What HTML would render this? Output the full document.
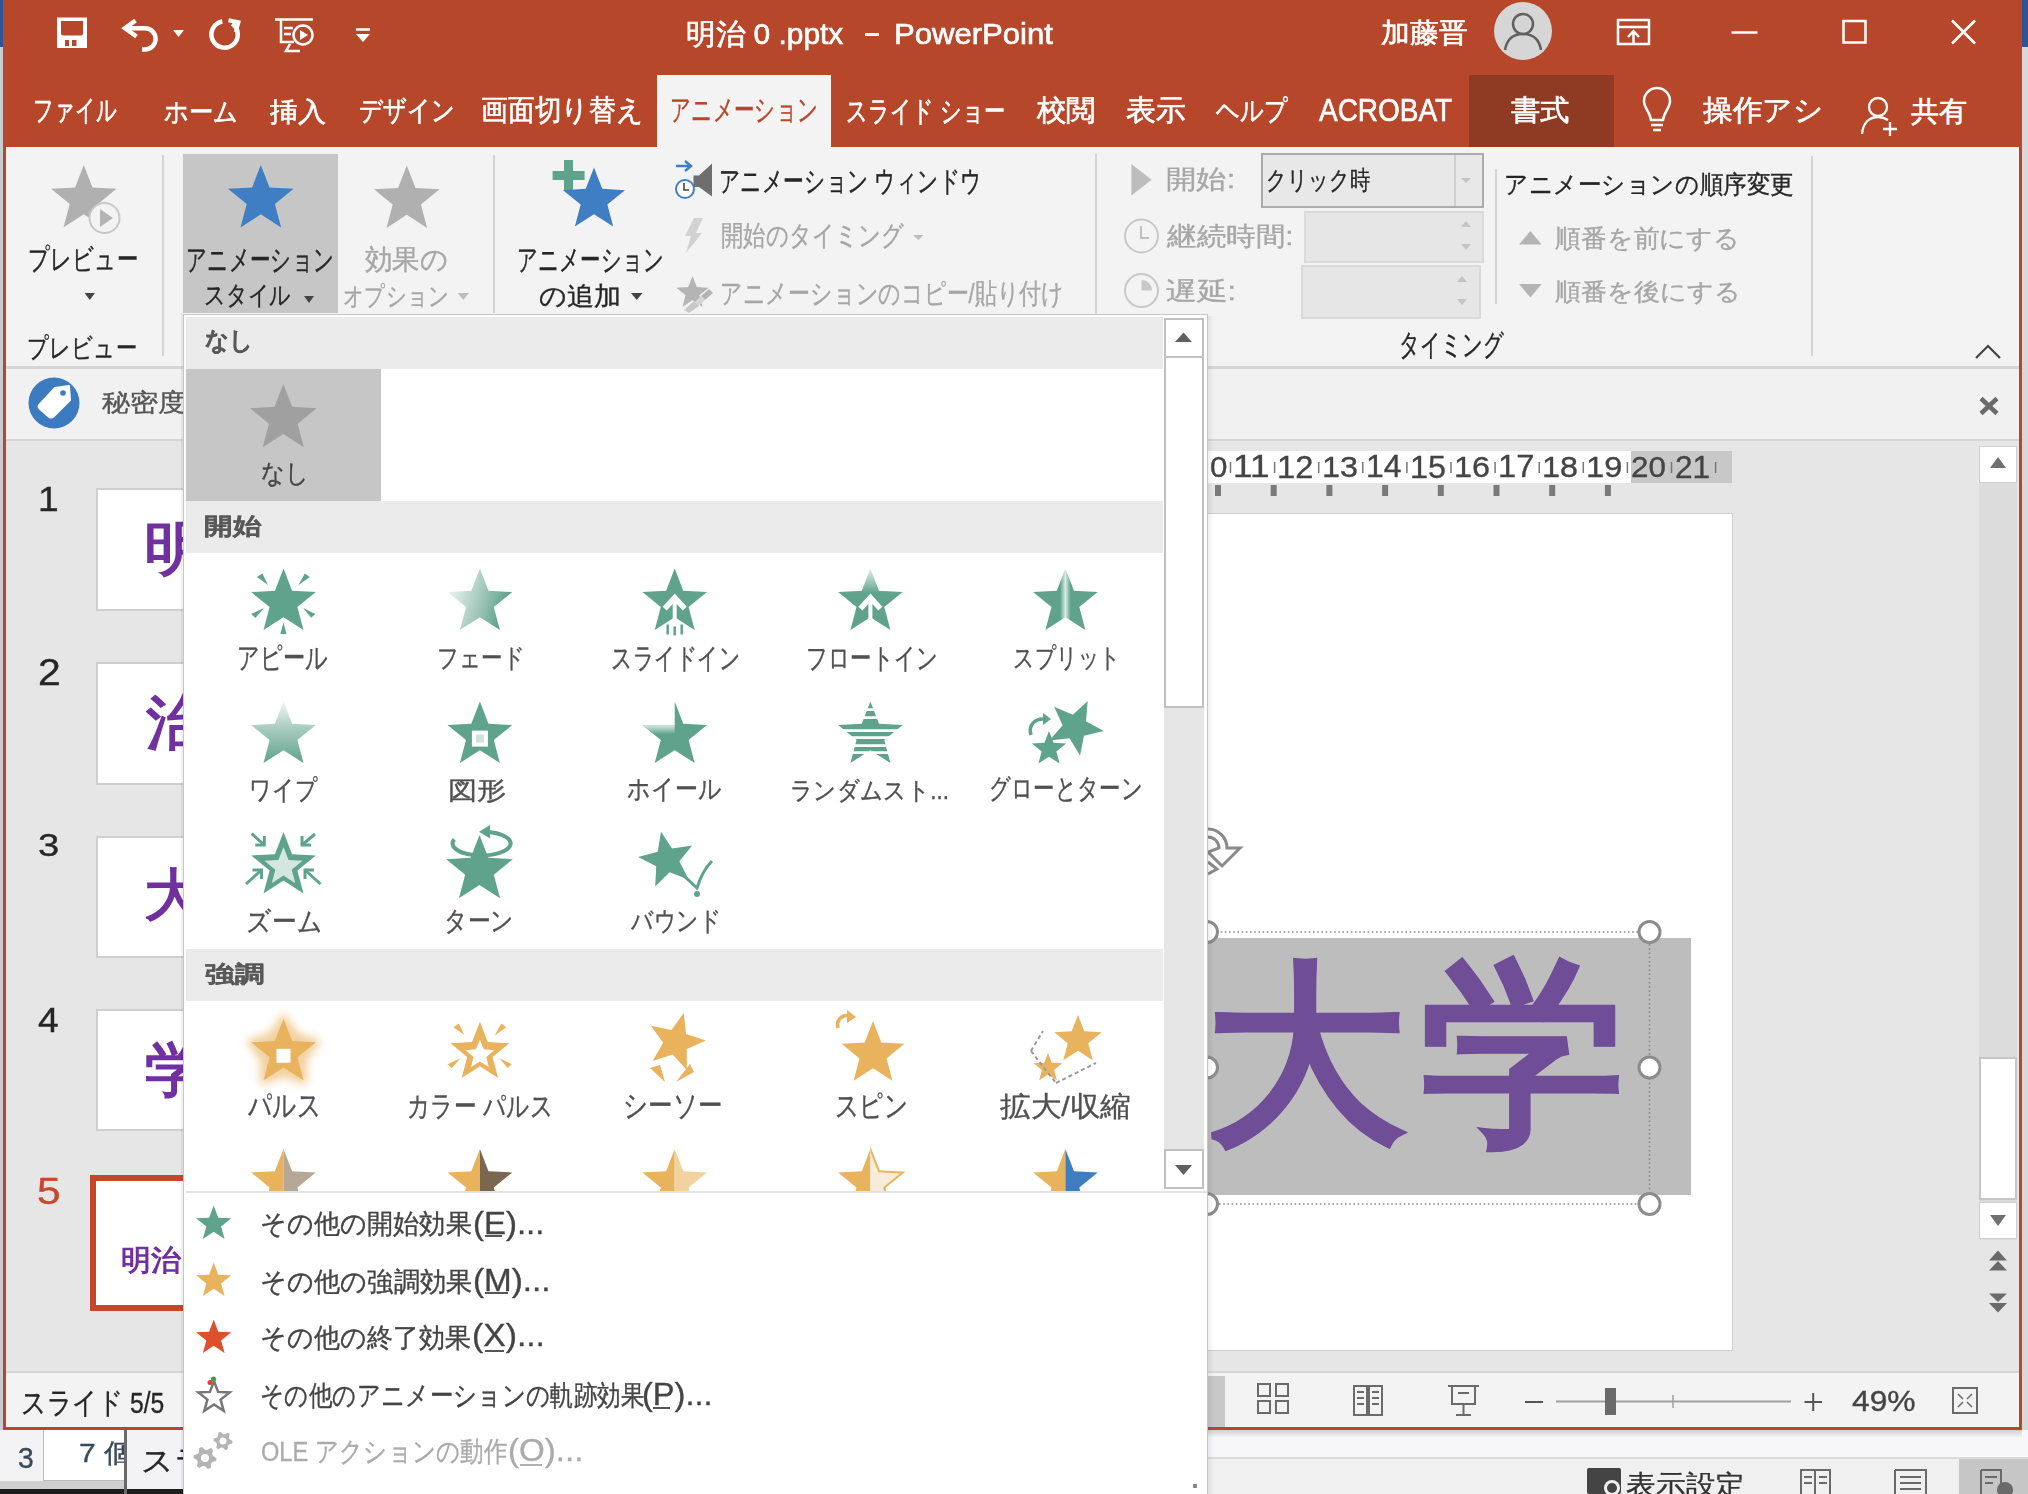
<!DOCTYPE html><html lang="ja"><head><meta charset="utf-8"><style>
html,body{margin:0;padding:0;}
body{width:2028px;height:1494px;overflow:hidden;position:relative;background:#F5F5F7;font-family:"Liberation Sans",sans-serif;}
.r{position:absolute;}
.t{position:absolute;white-space:pre;line-height:1;transform-origin:0 0;font-family:"Liberation Sans",sans-serif;}
svg{position:absolute;left:0;top:0;}
#dd{position:absolute;left:0;top:0;width:2028px;height:1494px;}
</style></head><body>
<div class="r" style="left:0px;top:0px;width:4px;height:1430px;background:#C9CDD2;"></div>
<div class="r" style="left:0px;top:0px;width:4px;height:47px;background:#2F5597;"></div>
<div class="r" style="left:2022px;top:0px;width:6px;height:1430px;background:#D8D8D8;"></div>
<div class="r" style="left:2022px;top:0px;width:6px;height:47px;background:#2F5597;"></div>
<div class="r" style="left:3px;top:0px;width:2019px;height:1430px;background:#B7472A;"></div>
<div class="r" style="left:657px;top:75px;width:174px;height:72px;background:#F3F3F3;"></div>
<div class="r" style="left:1469px;top:75px;width:145px;height:72px;background:#8F3A22;"></div>
<div class="r" style="left:6px;top:147px;width:2013px;height:219px;background:#F3F3F3;"></div>
<div class="r" style="left:6px;top:365.5px;width:2013px;height:3.0px;background:#D6D6D6;"></div>
<div class="r" style="left:183px;top:154px;width:155px;height:159px;background:#C6C6C6;"></div>
<div class="r" style="left:162px;top:155px;width:2px;height:201px;background:#D4D4D4;"></div>
<div class="r" style="left:493px;top:155px;width:2px;height:158px;background:#D4D4D4;"></div>
<div class="r" style="left:1095px;top:154px;width:2px;height:202px;background:#D4D4D4;"></div>
<div class="r" style="left:1495px;top:169px;width:2px;height:135px;background:#D4D4D4;"></div>
<div class="r" style="left:1811px;top:156px;width:2px;height:200px;background:#D4D4D4;"></div>
<div class="r" style="left:1261px;top:153px;width:223px;height:55px;background:#E8E8E8;box-sizing:border-box;border:2px solid #ABABAB;"></div>
<div class="r" style="left:1454px;top:155px;width:2px;height:51px;background:#D0D0D0;"></div>
<div class="r" style="left:1304px;top:211px;width:180px;height:52px;background:#E6E6E6;box-sizing:border-box;border:2px solid #DADADA;"></div>
<div class="r" style="left:1301px;top:265px;width:180px;height:54px;background:#E6E6E6;box-sizing:border-box;border:2px solid #DADADA;"></div>
<div class="r" style="left:6px;top:368.5px;width:2013px;height:70.0px;background:#F1F1F1;"></div>
<div class="r" style="left:6px;top:438.5px;width:2013px;height:3.5px;background:#D6D6D6;"></div>
<div class="r" style="left:6px;top:441px;width:2013px;height:930px;background:#E6E6E6;"></div>
<div class="r" style="left:96px;top:488px;width:204px;height:123px;background:#FFFFFF;box-sizing:border-box;border:2px solid #CFCFCF;"></div>
<div class="r" style="left:96px;top:662px;width:204px;height:123px;background:#FFFFFF;box-sizing:border-box;border:2px solid #CFCFCF;"></div>
<div class="r" style="left:96px;top:836px;width:204px;height:122px;background:#FFFFFF;box-sizing:border-box;border:2px solid #CFCFCF;"></div>
<div class="r" style="left:96px;top:1009px;width:204px;height:122px;background:#FFFFFF;box-sizing:border-box;border:2px solid #CFCFCF;"></div>
<div class="r" style="left:90px;top:1175px;width:210px;height:136px;background:#FFFFFF;box-sizing:border-box;border:6px solid #C4472B;"></div>
<div class="r" style="left:1208px;top:451px;width:423px;height:32px;background:#FFFFFF;"></div>
<div class="r" style="left:1631px;top:451px;width:101px;height:32px;background:#C8C8C8;"></div>
<div class="r" style="left:1207px;top:513px;width:526px;height:838px;background:#FFFFFF;box-sizing:border-box;border:1px solid #D0D0D0;"></div>
<div class="r" style="left:1208px;top:938px;width:483px;height:257px;background:#BDBDBD;"></div>
<div class="r" style="left:1979px;top:446px;width:38px;height:794px;background:#DCDCDC;"></div>
<div class="r" style="left:1979px;top:446px;width:38px;height:37px;background:#FFFFFF;box-sizing:border-box;border:1px solid #D0D0D0;"></div>
<div class="r" style="left:1979px;top:1057px;width:38px;height:143px;background:#FFFFFF;box-sizing:border-box;border:2px solid #C6C6C6;"></div>
<div class="r" style="left:1979px;top:1202px;width:38px;height:37px;background:#FFFFFF;box-sizing:border-box;border:1px solid #D0D0D0;"></div>
<div class="r" style="left:6px;top:1371px;width:2013px;height:2px;background:#D6D6D6;"></div>
<div class="r" style="left:6px;top:1373px;width:2013px;height:54px;background:#F3F3F3;"></div>
<div class="r" style="left:1208px;top:1376px;width:17px;height:51px;background:#C8C8C8;"></div>
<div class="r" style="left:0px;top:1430px;width:2028px;height:64px;background:#F7F7F9;"></div>
<div class="r" style="left:0px;top:1430px;width:183px;height:64px;background:#F3F3F5;"></div>
<div class="r" style="left:43px;top:1430px;width:82px;height:51px;background:#FFFFFF;box-sizing:border-box;border:1px solid #BDBDBD;border-top:none;"></div>
<div class="r" style="left:124px;top:1430px;width:3px;height:64px;background:#6A6A6A;"></div>
<div class="r" style="left:0px;top:1481px;width:125px;height:8px;background:#D0D0D0;"></div>
<div class="r" style="left:0px;top:1489px;width:183px;height:5px;background:#1E1E1E;"></div>
<div class="r" style="left:1207px;top:1430px;width:815px;height:8px;background:linear-gradient(rgba(0,0,0,0.16),rgba(0,0,0,0));"></div>
<div class="r" style="left:1207px;top:1457px;width:821px;height:2px;background:#DADADA;"></div>
<div class="r" style="left:1207px;top:1459px;width:821px;height:35px;background:#F0F0F0;"></div>
<div class="r" style="left:1959px;top:1459px;width:69px;height:35px;background:#C6C6C6;"></div>
<svg width="2028" height="1494" viewBox="0 0 2028 1494">
<defs>
<linearGradient id="gFade" x1="0" y1="0" x2="1" y2="0"><stop offset="0" stop-color="#EEF5F2"/><stop offset="0.55" stop-color="#A3C8BB"/><stop offset="1" stop-color="#5FA38C"/></linearGradient>
</defs>
<path d="M57,17.5 H87 V48 H57 Z" fill="#FFFFFF"/><path d="M61,21 H83 V33 Q83,35.5 80.5,35.5 H63.5 Q61,35.5 61,33 Z" fill="#B7472A"/><path d="M65,40 H69 V46 H65 Z M72,40 H76.5 V46 H72 Z" fill="#B7472A"/>
<path d="M127,28.2 H145 A10.6,10.6 0 0 1 145,49.4 H142" fill="none" stroke="#FFFFFF" stroke-width="4.5"/><path d="M135.5,20.5 L125,28.2 L136.5,36.5" fill="none" stroke="#FFFFFF" stroke-width="4.5"/>
<path d="M173,30 L184,30 L178.5,37Z" fill="#FFFFFF"/>
<path d="M222.3,21.5 A13.2,13.2 0 1 0 232.2,23.7" fill="none" stroke="#FFFFFF" stroke-width="4.5"/><path d="M228.5,20.2 L238.5,22.2 L235.8,32" fill="none" stroke="#FFFFFF" stroke-width="4"/>
<g fill="none" stroke="#FFFFFF" stroke-width="2.5"><path d="M275,19.5 H313"/><path d="M281,20 V42 H294"/><circle cx="303" cy="35" r="9.5"/><path d="M284,28 H293 M284,34 H291"/><path d="M290,44 L286,51 H300"/></g>
<path d="M300,30 L308,35 L300,40 Z" fill="#FFFFFF"/>
<path d="M356,29.5 H370" stroke="#FFFFFF" stroke-width="2.5"/>
<path d="M356,34 L370,34 L363.0,42Z" fill="#FFFFFF"/>
<circle cx="1523" cy="31" r="29" fill="#D6D6D6"/>
<g fill="none" stroke="#606060" stroke-width="2.5"><circle cx="1523" cy="24" r="10"/><path d="M1505,50 C1507,38 1514,34 1523,34 C1532,34 1539,38 1541,50"/></g>
<g fill="none" stroke="#FFFFFF" stroke-width="2.5"><path d="M1618,20 H1649 V44 H1618 Z M1618,27 H1649"/><path d="M1633.5,43 V32 M1628,37 L1633.5,31 L1639,37"/></g>
<path d="M1731.5,32.5 H1757.5" stroke="#FFFFFF" stroke-width="2.5"/>
<path d="M1843.5,21 H1865.5 V42.5 H1843.5 Z" fill="none" stroke="#FFFFFF" stroke-width="2.5"/>
<path d="M1952,20.5 L1975,43.5 M1975,20.5 L1952,43.5" stroke="#FFFFFF" stroke-width="2.5"/>
<g fill="none" stroke="#FFFFFF" stroke-width="2.5"><path d="M1651,120 C1650,112 1644,108 1644,101 A13,13 0 0 1 1670,101 C1670,108 1664,112 1663,120 Z"/><path d="M1651,125 H1663 M1653,130 H1661"/></g>
<g fill="none" stroke="#FFFFFF" stroke-width="2.3"><circle cx="1878" cy="107" r="9"/><path d="M1862,134 C1863,122 1870,117 1878,117 C1882,117 1885,118 1888,120"/><path d="M1890,122 V136 M1883,129 H1897"/></g>
<path d="M83.80,165.00 L92.49,187.43 L116.52,188.77 L97.87,203.97 L104.02,227.23 L83.80,214.19 L63.58,227.23 L69.73,203.97 L51.08,188.77 L75.11,187.43Z" fill="#B0B0B0" />
<circle cx="104.5" cy="218" r="15" fill="#F3F3F3" stroke="#C8C8C8" stroke-width="2"/>
<path d="M100,209 L113,218 L100,227 Z" fill="#B4B4B4"/>
<path d="M84.6,293 L95,293 L89.8,300Z" fill="#444444"/>
<path d="M260.80,165.00 L269.52,187.50 L293.61,188.84 L274.91,204.08 L281.08,227.41 L260.80,214.34 L240.52,227.41 L246.69,204.08 L227.99,188.84 L252.08,187.50Z" fill="#3F7EC3" />
<path d="M304,296 L314,296 L309.0,303Z" fill="#444444"/>
<path d="M406.80,165.50 L415.52,188.00 L439.61,189.34 L420.91,204.58 L427.08,227.91 L406.80,214.84 L386.52,227.91 L392.69,204.58 L373.99,189.34 L398.08,188.00Z" fill="#B0B0B0" />
<path d="M457.7,293 L469,293 L463.35,300Z" fill="#BDBDBD"/>
<path d="M564,160 H573 V171 H584.6 V180 H573 V191 H564 V180 H552.6 V171 H564 Z" fill="#5FA38C"/>
<path d="M594.00,167.60 L602.24,188.86 L625.00,190.13 L607.33,204.53 L613.16,226.57 L594.00,214.22 L574.84,226.57 L580.67,204.53 L563.00,190.13 L585.76,188.86Z" fill="#3F7EC3" />
<path d="M631,293 L642.5,293 L636.75,300Z" fill="#444444"/>
<path d="M676,166 H690 M685,161 L691,166 L685,171" fill="none" stroke="#3F7EC3" stroke-width="2.5"/>
<circle cx="685" cy="189" r="9" fill="#FFFFFF" stroke="#3F7EC3" stroke-width="2"/><path d="M684,183 V190 H689" fill="none" stroke="#444" stroke-width="1.6"/>
<path d="M693.5,175.5 H699 L712,163.5 V196.5 L699,187 H693.5 Z" fill="#6E6E6E"/>
<path d="M694,218 H703 L696,233 H702 L686,253 L691,236 H685 Z" fill="#D2D2D2"/>
<path d="M913,235 L923.6,235 L918.3,240Z" fill="#BDBDBD"/>
<path d="M692.50,276.00 L696.80,287.09 L708.67,287.75 L699.45,295.26 L702.49,306.75 L692.50,300.31 L682.51,306.75 L685.55,295.26 L676.33,287.75 L688.20,287.09Z" fill="#B4B4B4" />
<path d="M701,296 L709,289 L713,293 L705,300 Z" fill="#B4B4B4"/><path d="M695,302 L701,296 L705,300 L699,306 Z" fill="#D6D6D6"/><path d="M684,310 L694,301 L699,306 L689,313 Z" fill="#C8C8C8"/>
<path d="M1131.4,164 L1151.7,179.7 L1131.4,195.5 Z" fill="#BDBDBD"/>
<path d="M1461,178 L1471,178 L1466.0,183Z" fill="#C4C4C4"/>
<circle cx="1141.5" cy="236" r="16.5" fill="none" stroke="#C8C8C8" stroke-width="2"/><path d="M1141,226 V238 H1149" fill="none" stroke="#C0C0C0" stroke-width="2"/>
<circle cx="1141.5" cy="290.6" r="16.5" fill="none" stroke="#C8C8C8" stroke-width="2"/><path d="M1141.5,280 V290.6 H1152 A10.5,10.5 0 0 0 1141.5,280Z" fill="#C8C8C8"/>
<path d="M1461,227 L1471,227 L1466.0,221Z" fill="#C4C4C4"/>
<path d="M1461,244 L1471,244 L1466.0,250Z" fill="#C4C4C4"/>
<path d="M1457,282 L1467,282 L1462.0,276Z" fill="#C4C4C4"/>
<path d="M1457,299 L1467,299 L1462.0,305Z" fill="#C4C4C4"/>
<path d="M1519,244.5 L1541.7,244.5 L1530.35,231Z" fill="#B4B4B4"/>
<path d="M1519,284 L1541.7,284 L1530.35,297.5Z" fill="#B4B4B4"/>
<path d="M1976,358 L1988,346 L2000,358" fill="none" stroke="#444444" stroke-width="2.2"/>
<circle cx="54" cy="403" r="25.5" fill="#3C7BBF"/>
<path d="M40,404 L55,388 L69,386 L70,400 L54,416 Q51,419 48,416 L40,409 Q37,406 40,404Z" fill="#FFFFFF" stroke="#FFFFFF" stroke-width="2" stroke-linejoin="round"/><circle cx="63" cy="393" r="2.8" fill="#3C7BBF"/>
<path d="M1981,398.5 L1997,413.5 M1997,398.5 L1981,413.5" stroke="#6A6A6A" stroke-width="4.5"/>
<path d="M1230.5,462 V473" stroke="#777" stroke-width="1.5"/>
<path d="M1274.6,462 V473" stroke="#777" stroke-width="1.5"/>
<path d="M1318.7,462 V473" stroke="#777" stroke-width="1.5"/>
<path d="M1362.8,462 V473" stroke="#777" stroke-width="1.5"/>
<path d="M1406.9,462 V473" stroke="#777" stroke-width="1.5"/>
<path d="M1451.0,462 V473" stroke="#777" stroke-width="1.5"/>
<path d="M1495.1,462 V473" stroke="#777" stroke-width="1.5"/>
<path d="M1539.2,462 V473" stroke="#777" stroke-width="1.5"/>
<path d="M1583.3,462 V473" stroke="#777" stroke-width="1.5"/>
<path d="M1627.4,462 V473" stroke="#777" stroke-width="1.5"/>
<path d="M1671.5,462 V473" stroke="#777" stroke-width="1.5"/>
<path d="M1715.6,462 V473" stroke="#777" stroke-width="1.5"/>
<rect x="1215.0" y="485" width="6" height="11" fill="#7A7A7A"/>
<rect x="1270.7" y="485" width="6" height="11" fill="#7A7A7A"/>
<rect x="1326.4" y="485" width="6" height="11" fill="#7A7A7A"/>
<rect x="1382.1" y="485" width="6" height="11" fill="#7A7A7A"/>
<rect x="1437.8" y="485" width="6" height="11" fill="#7A7A7A"/>
<rect x="1493.5" y="485" width="6" height="11" fill="#7A7A7A"/>
<rect x="1549.2" y="485" width="6" height="11" fill="#7A7A7A"/>
<rect x="1604.9" y="485" width="6" height="11" fill="#7A7A7A"/>
<g fill="none" stroke="#8A8A8A" stroke-width="1.6" stroke-dasharray="1.6,2.6"><path d="M1208,932 H1649.5 V1204 H1208"/></g>
<circle cx="1649.5" cy="932" r="10.5" fill="#FFFFFF" stroke="#8C8C8C" stroke-width="3"/>
<circle cx="1649.5" cy="1067.5" r="10.5" fill="#FFFFFF" stroke="#8C8C8C" stroke-width="3"/>
<circle cx="1649.5" cy="1204" r="10.5" fill="#FFFFFF" stroke="#8C8C8C" stroke-width="3"/>
<circle cx="1207" cy="932" r="10.5" fill="#FFFFFF" stroke="#8C8C8C" stroke-width="3"/>
<circle cx="1207" cy="1204" r="10.5" fill="#FFFFFF" stroke="#8C8C8C" stroke-width="3"/>
<circle cx="1207" cy="1067.5" r="10.5" fill="#FFFFFF" stroke="#8C8C8C" stroke-width="3"/>
<path d="M1208,829 A19,19 0 0 1 1227,848 L1240,848 L1222,866 L1208,852 L1219,848 A11,11 0 0 0 1208,837" fill="none" stroke="#8A8A8A" stroke-width="3"/><path d="M1208,862 L1217,869 L1208,874" fill="none" stroke="#8A8A8A" stroke-width="3"/>
<path d="M1990,468 L2006,468 L1998.0,457Z" fill="#707070"/>
<path d="M1990,1215 L2006,1215 L1998.0,1226Z" fill="#707070"/>
<path d="M1989,1260.5 L1998,1250.5 L2007,1260.5 Z M1989,1270.5 L1998,1261 L2007,1270.5 Z" fill="#6A6A6A"/>
<path d="M1989,1293.5 L1998,1302 L2007,1293.5 Z M1989,1303 L1998,1312.5 L2007,1303 Z" fill="#6A6A6A"/>
<g fill="none" stroke="#6A6A6A" stroke-width="2"><rect x="1258" y="1384" width="12" height="12"/><rect x="1276" y="1384" width="12" height="12"/><rect x="1258" y="1401" width="12" height="12"/><rect x="1276" y="1401" width="12" height="12"/></g>
<g fill="none" stroke="#6A6A6A" stroke-width="2"><path d="M1354,1386 H1367 V1415 H1354 Z M1369,1386 H1382 V1415 H1369 Z M1357,1392 H1364 M1357,1398 H1364 M1357,1404 H1364 M1372,1392 H1379 M1372,1398 H1379 M1372,1404 H1379"/></g>
<g fill="none" stroke="#6A6A6A" stroke-width="2"><path d="M1448,1386 H1479 M1452,1386 V1404 H1475 V1386 M1458,1393 H1469 M1463.5,1404 V1415 M1456,1415 H1471"/></g>
<path d="M1525,1402 H1543" stroke="#555" stroke-width="2"/>
<path d="M1556,1401.5 H1791" stroke="#A0A0A0" stroke-width="2"/><path d="M1673,1395 V1408" stroke="#A0A0A0" stroke-width="1.5"/>
<rect x="1605" y="1388" width="11" height="27" fill="#6A6A6A"/>
<path d="M1804.5,1402 H1822 M1813.2,1393 V1411" stroke="#555" stroke-width="2"/>
<g fill="none" stroke="#6A6A6A" stroke-width="2"><rect x="1953" y="1388" width="24" height="25"/></g><path d="M1958,1394 L1963,1399 M1972,1394 L1967,1399 M1958,1407 L1963,1402 M1972,1407 L1967,1402" stroke="#6A6A6A" stroke-width="1.5"/>
<rect x="1587" y="1468" width="34" height="26" rx="2" fill="#444444"/><circle cx="1612" cy="1488" r="8" fill="#F0F0F0"/><circle cx="1612" cy="1488" r="5" fill="#444444"/>
<g fill="none" stroke="#6A6A6A" stroke-width="2"><path d="M1801,1494 V1470 H1815 V1494 M1816,1470 H1830 V1494 M1804,1477 H1812 M1804,1483 H1812 M1819,1477 H1827 M1819,1483 H1827"/><path d="M1895,1470 H1926 V1494 M1895,1470 V1494 M1900,1477 H1921 M1900,1483 H1921 M1900,1489 H1921"/><path d="M1981,1470 H2001 V1494 M1981,1470 V1494 M1985,1477 H1997 M1985,1483 H1993"/></g><circle cx="2005" cy="1490" r="8" fill="#6A6A6A"/>
</svg>
<div class="t" style="left:686.31px;top:20.42px;font-size:29.22px;color:#FFFFFF;-webkit-text-stroke:0.65px #FFFFFF;transform:scaleX(1.0220);">明治 0 .pptx</div>
<div class="t" style="left:893.51px;top:19.40px;font-size:30.00px;color:#FFFFFF;-webkit-text-stroke:0.65px #FFFFFF;transform:scaleX(1.0358);">PowerPoint</div>
<div class="t" style="left:1380.63px;top:19.19px;font-size:27.08px;color:#FFFFFF;-webkit-text-stroke:0.65px #FFFFFF;transform:scaleX(1.0711);">加藤晋</div>
<div class="t" style="left:33.25px;top:95.97px;font-size:29.08px;color:#FFFFFF;-webkit-text-stroke:0.65px #FFFFFF;transform:scaleX(0.7026);">ファイル</div>
<div class="t" style="left:163.72px;top:97.63px;font-size:27.13px;color:#FFFFFF;-webkit-text-stroke:0.65px #FFFFFF;transform:scaleX(0.8995);">ホーム</div>
<div class="t" style="left:269.72px;top:97.53px;font-size:27.24px;color:#FFFFFF;-webkit-text-stroke:0.65px #FFFFFF;transform:scaleX(1.0428);">挿入</div>
<div class="t" style="left:358.62px;top:97.18px;font-size:27.66px;color:#FFFFFF;-webkit-text-stroke:0.65px #FFFFFF;transform:scaleX(0.8322);">デザイン</div>
<div class="t" style="left:481.18px;top:96.41px;font-size:28.57px;color:#FFFFFF;-webkit-text-stroke:0.65px #FFFFFF;transform:scaleX(0.9242);">画面切り替え</div>
<div class="t" style="left:669.92px;top:94.89px;font-size:30.36px;color:#B7472A;-webkit-text-stroke:0.35px #B7472A;transform:scaleX(0.6863);">アニメーション</div>
<div class="t" style="left:845.78px;top:95.78px;font-size:29.31px;color:#FFFFFF;-webkit-text-stroke:0.65px #FFFFFF;transform:scaleX(0.7314);">スライド ショー</div>
<div class="t" style="left:1036.50px;top:96.34px;font-size:28.65px;color:#FFFFFF;-webkit-text-stroke:0.65px #FFFFFF;transform:scaleX(1.0167);">校閲</div>
<div class="t" style="left:1125.61px;top:96.09px;font-size:28.95px;color:#FFFFFF;-webkit-text-stroke:0.65px #FFFFFF;transform:scaleX(1.0292);">表示</div>
<div class="t" style="left:1216.27px;top:97.22px;font-size:27.60px;color:#FFFFFF;-webkit-text-stroke:0.65px #FFFFFF;transform:scaleX(0.8287);">ヘルプ</div>
<div class="t" style="left:1319.00px;top:95.25px;font-size:31.69px;color:#FFFFFF;-webkit-text-stroke:0.65px #FFFFFF;transform:scaleX(0.8821);">ACROBAT</div>
<div class="t" style="left:1510.91px;top:95.83px;font-size:29.26px;color:#FFFFFF;-webkit-text-stroke:0.65px #FFFFFF;transform:scaleX(1.0131);">書式</div>
<div class="t" style="left:1702.70px;top:95.83px;font-size:29.26px;color:#FFFFFF;-webkit-text-stroke:0.65px #FFFFFF;transform:scaleX(1.0176);">操作アシ</div>
<div class="t" style="left:1910.93px;top:96.59px;font-size:28.35px;color:#FFFFFF;-webkit-text-stroke:0.65px #FFFFFF;transform:scaleX(1.0000);">共有</div>
<div class="t" style="left:28.06px;top:245.13px;font-size:29.17px;color:#262626;-webkit-text-stroke:0.35px #262626;transform:scaleX(0.7382);">プレビュー</div>
<div class="t" style="left:27.07px;top:333.73px;font-size:27.08px;color:#262626;-webkit-text-stroke:0.35px #262626;transform:scaleX(0.7912);">プレビュー</div>
<div class="t" style="left:185.92px;top:244.11px;font-size:30.38px;color:#262626;-webkit-text-stroke:0.35px #262626;transform:scaleX(0.6860);">アニメーション</div>
<div class="t" style="left:204.35px;top:283.15px;font-size:25.56px;color:#262626;-webkit-text-stroke:0.35px #262626;transform:scaleX(0.8082);">スタイル</div>
<div class="t" style="left:364.73px;top:246.13px;font-size:27.99px;color:#A6A6A6;-webkit-text-stroke:0.35px #A6A6A6;transform:scaleX(0.9796);">効果の</div>
<div class="t" style="left:343.26px;top:282.74px;font-size:26.04px;color:#A6A6A6;-webkit-text-stroke:0.35px #A6A6A6;transform:scaleX(0.7875);">オプション</div>
<div class="t" style="left:516.93px;top:244.11px;font-size:30.38px;color:#262626;-webkit-text-stroke:0.35px #262626;transform:scaleX(0.6812);">アニメーション</div>
<div class="t" style="left:538.91px;top:282.70px;font-size:26.09px;color:#262626;-webkit-text-stroke:0.35px #262626;transform:scaleX(1.0418);">の追加</div>
<div class="t" style="left:718.95px;top:167.45px;font-size:28.62px;color:#262626;-webkit-text-stroke:0.35px #262626;transform:scaleX(0.7165);">アニメーション ウィンドウ</div>
<div class="t" style="left:720.67px;top:222.34px;font-size:27.66px;color:#A6A6A6;-webkit-text-stroke:0.35px #A6A6A6;transform:scaleX(0.7984);">開始のタイミング</div>
<div class="t" style="left:719.78px;top:278.87px;font-size:28.28px;color:#A6A6A6;-webkit-text-stroke:0.35px #A6A6A6;transform:scaleX(0.7839);">アニメーションのコピー/貼り付け</div>
<div class="t" style="left:1166.15px;top:166.42px;font-size:26.34px;color:#A6A6A6;-webkit-text-stroke:0.35px #A6A6A6;transform:scaleX(1.1673);">開始:</div>
<div class="t" style="left:1265.81px;top:168.23px;font-size:25.52px;color:#262626;-webkit-text-stroke:0.35px #262626;transform:scaleX(0.7789);">クリック時</div>
<div class="t" style="left:1167.00px;top:223.22px;font-size:26.04px;color:#A6A6A6;-webkit-text-stroke:0.35px #A6A6A6;transform:scaleX(1.1364);">継続時間:</div>
<div class="t" style="left:1166.39px;top:278.96px;font-size:25.93px;color:#A6A6A6;-webkit-text-stroke:0.35px #A6A6A6;transform:scaleX(1.1817);">遅延:</div>
<div class="t" style="left:1399.37px;top:329.92px;font-size:29.78px;color:#262626;-webkit-text-stroke:0.35px #262626;transform:scaleX(0.6803);">タイミング</div>
<div class="t" style="left:1503.64px;top:171.50px;font-size:24.95px;color:#262626;-webkit-text-stroke:0.35px #262626;transform:scaleX(0.9448);">アニメーションの順序変更</div>
<div class="t" style="left:1555.49px;top:226.50px;font-size:24.75px;color:#A6A6A6;-webkit-text-stroke:0.35px #A6A6A6;transform:scaleX(1.0331);">順番を前にする</div>
<div class="t" style="left:1555.49px;top:281.13px;font-size:23.66px;color:#A6A6A6;-webkit-text-stroke:0.35px #A6A6A6;transform:scaleX(1.0825);">順番を後にする</div>
<div class="t" style="left:101.72px;top:389.75px;font-size:25.00px;color:#555555;-webkit-text-stroke:0.35px #555555;transform:scaleX(1.1293);">秘密度</div>
<div class="t" style="left:38.02px;top:481.82px;font-size:35.51px;color:#262626;-webkit-text-stroke:0.35px #262626;transform:scaleX(1.0479);">1</div>
<div class="t" style="left:37.56px;top:654.90px;font-size:36.00px;color:#262626;-webkit-text-stroke:0.35px #262626;transform:scaleX(1.1353);">2</div>
<div class="t" style="left:38.07px;top:830.20px;font-size:31.97px;color:#262626;-webkit-text-stroke:0.35px #262626;transform:scaleX(1.1979);">3</div>
<div class="t" style="left:38.25px;top:1002.05px;font-size:35.29px;color:#262626;-webkit-text-stroke:0.35px #262626;transform:scaleX(1.0556);">4</div>
<div class="t" style="left:37.30px;top:1173.06px;font-size:37.14px;color:#C8472B;-webkit-text-stroke:0.35px #C8472B;transform:scaleX(1.1457);">5</div>
<div class="t" style="left:143.84px;top:520.07px;font-size:58.51px;color:#7030A0;-webkit-text-stroke:0.00px #7030A0;font-weight:700;transform:scaleX(1.0805);">明</div>
<div class="t" style="left:145.60px;top:693.41px;font-size:59.18px;color:#7030A0;-webkit-text-stroke:0.00px #7030A0;font-weight:700;transform:scaleX(0.9603);">治</div>
<div class="t" style="left:144.22px;top:867.44px;font-size:56.12px;color:#7030A0;-webkit-text-stroke:0.00px #7030A0;font-weight:700;transform:scaleX(1.0580);">大</div>
<div class="t" style="left:144.79px;top:1039.81px;font-size:59.48px;color:#7030A0;-webkit-text-stroke:0.00px #7030A0;font-weight:700;transform:scaleX(1.0194);">学</div>
<div class="t" style="left:120.51px;top:1246.31px;font-size:28.98px;color:#7030A0;-webkit-text-stroke:0.00px #7030A0;font-weight:700;transform:scaleX(1.0299);">明治</div>
<div class="t" style="left:21.43px;top:1387.71px;font-size:29.89px;color:#262626;-webkit-text-stroke:0.35px #262626;transform:scaleX(0.8238);">スライド 5/5</div>
<div class="t" style="left:17.87px;top:1443.63px;font-size:29.15px;color:#3A4A5A;-webkit-text-stroke:0.35px #3A4A5A;transform:scaleX(0.9706);">3</div>
<div class="t" style="left:79.10px;top:1440.97px;font-size:25.54px;color:#3A4A5A;-webkit-text-stroke:0.35px #3A4A5A;transform:scaleX(1.1745);">7 個</div>
<div class="t" style="left:141.48px;top:1445.56px;font-size:29.63px;color:#262626;-webkit-text-stroke:0.35px #262626;transform:scaleX(1.0618);">スラ</div>
<div class="t" style="left:1209.75px;top:452.00px;font-size:30.00px;color:#444444;-webkit-text-stroke:0.35px #444444;transform:scaleX(1.0417);">0</div>
<div class="t" style="left:1233.19px;top:451.56px;font-size:30.87px;color:#444444;-webkit-text-stroke:0.35px #444444;transform:scaleX(1.1391);">11</div>
<div class="t" style="left:1277.49px;top:451.94px;font-size:30.43px;color:#444444;-webkit-text-stroke:0.35px #444444;transform:scaleX(1.0731);">12</div>
<div class="t" style="left:1321.61px;top:452.00px;font-size:30.00px;color:#444444;-webkit-text-stroke:0.35px #444444;transform:scaleX(1.0774);">13</div>
<div class="t" style="left:1365.74px;top:451.56px;font-size:30.87px;color:#444444;-webkit-text-stroke:0.35px #444444;transform:scaleX(1.0366);">14</div>
<div class="t" style="left:1409.81px;top:451.63px;font-size:30.43px;color:#444444;-webkit-text-stroke:0.35px #444444;transform:scaleX(1.0623);">15</div>
<div class="t" style="left:1453.91px;top:452.00px;font-size:30.00px;color:#444444;-webkit-text-stroke:0.35px #444444;transform:scaleX(1.0774);">16</div>
<div class="t" style="left:1497.99px;top:451.56px;font-size:30.87px;color:#444444;-webkit-text-stroke:0.35px #444444;transform:scaleX(1.0578);">17</div>
<div class="t" style="left:1542.11px;top:452.00px;font-size:30.00px;color:#444444;-webkit-text-stroke:0.35px #444444;transform:scaleX(1.0774);">18</div>
<div class="t" style="left:1586.19px;top:452.00px;font-size:30.00px;color:#444444;-webkit-text-stroke:0.35px #444444;transform:scaleX(1.0884);">19</div>
<div class="t" style="left:1631.33px;top:452.00px;font-size:30.00px;color:#444444;-webkit-text-stroke:0.35px #444444;transform:scaleX(1.0458);">20</div>
<div class="t" style="left:1675.42px;top:451.94px;font-size:30.43px;color:#444444;-webkit-text-stroke:0.35px #444444;transform:scaleX(1.0412);">21</div>
<div class="t" style="left:1204.63px;top:958.04px;font-size:195.92px;color:#704E97;-webkit-text-stroke:1.00px #704E97;font-weight:700;transform:scaleX(1.0331);">大</div>
<div class="t" style="left:1421.41px;top:954.00px;font-size:200.00px;color:#704E97;-webkit-text-stroke:1.00px #704E97;font-weight:700;transform:scaleX(1.0223);">学</div>
<div class="t" style="left:1852.36px;top:1387.41px;font-size:28.59px;color:#444444;-webkit-text-stroke:0.35px #444444;transform:scaleX(1.1120);">49%</div>
<div class="t" style="left:1625.82px;top:1471.73px;font-size:26.53px;color:#333333;-webkit-text-stroke:0.35px #333333;transform:scaleX(1.1047);">表示設定</div>
<div class="r" style="left:127px;top:1430px;width:15px;height:59px;background:#F3F3F5;"></div>
<div class="r" style="left:124px;top:1430px;width:3px;height:64px;background:#6A6A6A;"></div>
<div class="r" style="left:865px;top:33px;width:14px;height:3px;background:#FFFFFF;"></div>
<div id="dd">
<div class="r" style="left:181px;top:313px;width:2px;height:1181px;background:rgba(0,0,0,0.06);"></div>
<div class="r" style="left:1208px;top:316px;width:6px;height:1178px;background:linear-gradient(to right,rgba(0,0,0,0.07),rgba(0,0,0,0));"></div>
<div class="r" style="left:183px;top:314px;width:1025px;height:1180px;background:#FFFFFF;box-sizing:border-box;border:1px solid #C6C6C6;border-bottom:none;"></div>
<div class="r" style="left:186px;top:317px;width:977px;height:52px;background:#EBEBEB;"></div>
<div class="r" style="left:186px;top:369px;width:195px;height:132px;background:#C6C6C6;"></div>
<div class="r" style="left:186px;top:501px;width:977px;height:52px;background:#EBEBEB;"></div>
<div class="r" style="left:186px;top:949px;width:977px;height:52px;background:#EBEBEB;"></div>
<div class="r" style="left:1164px;top:318px;width:40px;height:870px;background:#E6E6E6;"></div>
<div class="r" style="left:1164px;top:318px;width:40px;height:40px;background:#FFFFFF;box-sizing:border-box;border:2px solid #C0C0C0;"></div>
<div class="r" style="left:1164px;top:356px;width:40px;height:352px;background:#FFFFFF;box-sizing:border-box;border:2px solid #C0C0C0;"></div>
<div class="r" style="left:1164px;top:1149px;width:40px;height:40px;background:#FFFFFF;box-sizing:border-box;border:2px solid #C0C0C0;"></div>
<div class="r" style="left:186px;top:1191px;width:1021px;height:2px;background:#E3E3E3;"></div>
<svg width="2028" height="1494" viewBox="0 0 2028 1494">
<defs>
<linearGradient id="fadeH" x1="0" y1="0.3" x2="1" y2="0.6"><stop offset="0" stop-color="#F0F6F4"/><stop offset="0.5" stop-color="#A6CABD"/><stop offset="0.9" stop-color="#5FA38C"/></linearGradient>
<linearGradient id="wipeV" x1="0" y1="0" x2="0" y2="1"><stop offset="0" stop-color="#F0F6F4"/><stop offset="0.45" stop-color="#A6CABD"/><stop offset="1" stop-color="#5FA38C"/></linearGradient>
<linearGradient id="floatV" x1="0" y1="0" x2="0" y2="1"><stop offset="0" stop-color="#E6F0EC"/><stop offset="0.4" stop-color="#5FA38C"/><stop offset="1" stop-color="#5FA38C"/></linearGradient>
<linearGradient id="splitH" x1="0" y1="0" x2="1" y2="0"><stop offset="0" stop-color="#5FA38C"/><stop offset="0.42" stop-color="#5FA38C"/><stop offset="0.5" stop-color="#DDEBE6"/><stop offset="0.58" stop-color="#5FA38C"/><stop offset="1" stop-color="#5FA38C"/></linearGradient>
<linearGradient id="wheelG" x1="0" y1="0" x2="0" y2="1"><stop offset="0" stop-color="#D8E9E3"/><stop offset="1" stop-color="#5FA38C"/></linearGradient>
<filter id="blur4" x="-50%" y="-50%" width="200%" height="200%"><feGaussianBlur stdDeviation="4.5"/></filter>
</defs>
<path d="M283.30,384.00 L292.15,406.82 L316.59,408.18 L297.61,423.65 L303.87,447.32 L283.30,434.05 L262.73,447.32 L268.99,423.65 L250.01,408.18 L274.45,406.82Z" fill="#A0A0A0" />
<path d="M1175,342 L1192,342 L1183.5,332.5Z" fill="#606060"/>
<path d="M1175,1165 L1192,1165 L1183.5,1175Z" fill="#606060"/>
<path d="M283.50,568.60 L292.09,590.77 L315.84,592.09 L297.40,607.12 L303.48,630.11 L283.50,617.22 L263.52,630.11 L269.60,607.12 L251.16,592.09 L274.91,590.77Z" fill="#5FA38C" />
<path d="M257.0,577.1 L262.4,573.4 L268.0,584.9Z" fill="#5FA38C"/>
<path d="M304.9,573.4 L309.8,577.1 L298.3,585.2Z" fill="#5FA38C"/>
<path d="M251.1,614.0 L255.4,618.0 L263.9,608.0Z" fill="#5FA38C"/>
<path d="M311.1,617.8 L315.4,614.0 L303.1,608.0Z" fill="#5FA38C"/>
<path d="M280.3,633.9 L286.5,633.9 L283.5,622.6Z" fill="#5FA38C"/>
<path d="M479.90,568.60 L488.49,590.77 L512.24,592.09 L493.80,607.12 L499.88,630.11 L479.90,617.22 L459.92,630.11 L466.00,607.12 L447.56,592.09 L471.31,590.77Z" fill="url(#fadeH)" />
<path d="M674.70,568.60 L683.29,590.77 L707.04,592.09 L688.60,607.12 L694.68,630.11 L674.70,617.22 L654.72,630.11 L660.80,607.12 L642.36,592.09 L666.11,590.77Z" fill="#5FA38C" />
<path d="M664.7,608.6 L674.7,597.6 L684.7,608.6" fill="none" stroke="#FFFFFF" stroke-width="5.5"/><path d="M674.7,599.6 V632.6" stroke="#FFFFFF" stroke-width="4"/>
<path d="M667.7,624.6 V634.6 M681.7,624.6 V634.6 M674.7,626.6 V635.6" stroke="#5FA38C" stroke-width="2.5"/>
<path d="M870.40,568.60 L878.99,590.77 L902.74,592.09 L884.30,607.12 L890.38,630.11 L870.40,617.22 L850.42,630.11 L856.50,607.12 L838.06,592.09 L861.81,590.77Z" fill="url(#floatV)" />
<path d="M860.4,608.6 L870.4,597.6 L880.4,608.6" fill="none" stroke="#FFFFFF" stroke-width="5.5"/><path d="M870.4,599.6 V632.6" stroke="#FFFFFF" stroke-width="4"/>
<path d="M1065.40,568.60 L1073.99,590.77 L1097.74,592.09 L1079.30,607.12 L1085.38,630.11 L1065.40,617.22 L1045.42,630.11 L1051.50,607.12 L1033.06,592.09 L1056.81,590.77Z" fill="url(#splitH)" />
<path d="M283.50,701.60 L292.09,723.77 L315.84,725.09 L297.40,740.12 L303.48,763.11 L283.50,750.22 L263.52,763.11 L269.60,740.12 L251.16,725.09 L274.91,723.77Z" fill="url(#wipeV)" />
<path d="M479.90,701.60 L488.49,723.77 L512.24,725.09 L493.80,740.12 L499.88,763.11 L479.90,750.22 L459.92,763.11 L466.00,740.12 L447.56,725.09 L471.31,723.77Z" fill="#5FA38C" />
<rect x="471.9" y="730.6" width="16" height="16" fill="#FFFFFF"/><rect x="475.9" y="734.6" width="8" height="8" fill="#CFE3DB"/>
<clipPath id="wcl2"><rect x="634.7" y="725.1" width="80" height="60"/><rect x="674.7" y="695.6" width="40" height="60"/></clipPath>
<path d="M674.70,701.60 L683.29,723.77 L707.04,725.09 L688.60,740.12 L694.68,763.11 L674.70,750.22 L654.72,763.11 L660.80,740.12 L642.36,725.09 L666.11,723.77Z" fill="#FFFFFF"/>
<path d="M674.70,701.60 L683.29,723.77 L707.04,725.09 L688.60,740.12 L694.68,763.11 L674.70,750.22 L654.72,763.11 L660.80,740.12 L642.36,725.09 L666.11,723.77Z" fill="#5FA38C" clip-path="url(#wcl2)"/>
<clipPath id="wclip"><path d="M674.70,701.60 L683.29,723.77 L707.04,725.09 L688.60,740.12 L694.68,763.11 L674.70,750.22 L654.72,763.11 L660.80,740.12 L642.36,725.09 L666.11,723.77Z"/></clipPath>
<rect x="640.7" y="725.1" width="34" height="9" fill="url(#wheelG)" clip-path="url(#wclip)"/>
<path d="M870.40,701.60 L878.99,723.77 L902.74,725.09 L884.30,740.12 L890.38,763.11 L870.40,750.22 L850.42,763.11 L856.50,740.12 L838.06,725.09 L861.81,723.77Z" fill="#5FA38C" />
<path d="M836.4,709.6 H904.4" stroke="#FFFFFF" stroke-width="2.6"/>
<path d="M836.4,717.6 H904.4" stroke="#FFFFFF" stroke-width="2.6"/>
<path d="M836.4,730.6 H904.4" stroke="#FFFFFF" stroke-width="2.6"/>
<path d="M836.4,737.6 H904.4" stroke="#FFFFFF" stroke-width="2.6"/>
<path d="M836.4,745.6 H904.4" stroke="#FFFFFF" stroke-width="2.6"/>
<path d="M836.4,752.6 H904.4" stroke="#FFFFFF" stroke-width="2.6"/>
<path d="M1087.71,700.93 L1086.01,721.15 L1103.72,731.04 L1083.97,735.66 L1080.04,755.56 L1069.53,738.21 L1049.39,740.61 L1062.65,725.26 L1054.14,706.85 L1072.83,714.72Z" fill="#5FA38C" />
<path d="M1049.00,731.00 L1053.55,742.74 L1066.12,743.44 L1056.36,751.39 L1059.58,763.56 L1049.00,756.74 L1038.42,763.56 L1041.64,751.39 L1031.88,743.44 L1044.45,742.74Z" fill="#5FA38C" />
<path d="M1031,735 C1028,725 1035,718 1045,719" fill="none" stroke="#5FA38C" stroke-width="3.5"/><path d="M1043,713 L1051,719 L1043,725Z" fill="#5FA38C"/>
<path d="M283.50,832.00 L292.09,854.17 L315.84,855.49 L297.40,870.52 L303.48,893.51 L283.50,880.62 L263.52,893.51 L269.60,870.52 L251.16,855.49 L274.91,854.17Z" fill="#5FA38C" />
<path d="M283.50,847.00 L288.55,860.04 L302.52,860.82 L291.68,869.66 L295.26,883.18 L283.50,875.60 L271.74,883.18 L275.32,869.66 L264.48,860.82 L278.45,860.04Z" fill="#D4E6E0" />
<path d="M251.7,833.7 L264.3,845" stroke="#5FA38C" stroke-width="3"/><path d="M264.3,836 V845 H255.3" fill="none" stroke="#5FA38C" stroke-width="3"/>
<path d="M315,834 L302,845" stroke="#5FA38C" stroke-width="3"/><path d="M302,836 V845 H311" fill="none" stroke="#5FA38C" stroke-width="3"/>
<path d="M246,884 L261.5,870" stroke="#5FA38C" stroke-width="3"/><path d="M261.5,879 V870 H252.5" fill="none" stroke="#5FA38C" stroke-width="3"/>
<path d="M320.5,884 L305,870" stroke="#5FA38C" stroke-width="3"/><path d="M305,879 V870 H314" fill="none" stroke="#5FA38C" stroke-width="3"/>
<path d="M454.3,839.4 A29,12 0 1 0 486.5,831.7" fill="none" stroke="#5FA38C" stroke-width="4"/><path d="M479,831.7 L490,825 L490,838.5 Z" fill="#5FA38C"/>
<path d="M479.50,835.00 L488.35,857.82 L512.79,859.18 L493.81,874.65 L500.07,898.32 L479.50,885.05 L458.93,898.32 L465.19,874.65 L446.21,859.18 L470.65,857.82Z" fill="#5FA38C" />
<path d="M660.97,831.63 L672.07,848.61 L692.11,845.50 L679.40,861.30 L688.55,879.40 L669.59,872.20 L655.20,886.49 L656.20,866.24 L638.16,856.97 L657.73,851.66Z" fill="#5FA38C" />
<path d="M678,872 C688,878 694,886 697,888 C700,878 705,868 712,861" fill="none" stroke="#5FA38C" stroke-width="3"/><circle cx="697" cy="894" r="3" fill="#5FA38C"/>
<path d="M283.50,1012.80 L298.08,1032.74 L321.54,1040.44 L307.09,1060.46 L307.01,1085.16 L283.50,1077.60 L259.99,1085.16 L259.91,1060.46 L245.46,1040.44 L268.92,1032.74Z" fill="#E9B25D" filter="url(#blur4)" opacity="0.6"/>
<path d="M283.50,1018.80 L292.09,1040.97 L315.84,1042.29 L297.40,1057.32 L303.48,1080.31 L283.50,1067.42 L263.52,1080.31 L269.60,1057.32 L251.16,1042.29 L274.91,1040.97Z" fill="#E9B25D" />
<rect x="276.5" y="1048.8" width="14" height="14" fill="#FFFFFF"/>
<path d="M479.90,1021.80 L487.74,1042.02 L509.38,1043.22 L492.58,1056.92 L498.12,1077.88 L479.90,1066.13 L461.68,1077.88 L467.22,1056.92 L450.42,1043.22 L472.06,1042.02Z" fill="#E9B25D" />
<path d="M479.90,1039.80 L483.87,1049.34 L494.17,1050.16 L486.32,1056.89 L488.72,1066.94 L479.90,1061.55 L471.08,1066.94 L473.48,1056.89 L465.63,1050.16 L475.93,1049.34Z" fill="#FFFFFF" />
<path d="M453.4,1027.3 L458.8,1023.6 L464.4,1035.1Z" fill="#E9B25D"/>
<path d="M501.3,1023.6 L506.2,1027.3 L494.7,1035.4Z" fill="#E9B25D"/>
<path d="M447.5,1064.2 L451.8,1068.2 L460.3,1058.2Z" fill="#E9B25D"/>
<path d="M507.5,1068.0 L511.8,1064.2 L499.5,1058.2Z" fill="#E9B25D"/>
<path d="M683.76,1013.02 L686.03,1033.88 L705.96,1040.43 L686.82,1049.03 L686.75,1070.01 L672.66,1054.46 L652.69,1060.88 L663.12,1042.68 L650.84,1025.66 L671.38,1029.96Z" fill="#E9B25D" />
<path d="M650,1068 L665,1082 L660,1065Z M690,1064 L676,1082 L694,1072Z" fill="#E9B25D"/>
<path d="M873.00,1021.00 L881.34,1042.52 L904.38,1043.80 L886.50,1058.38 L892.40,1080.70 L873.00,1068.19 L853.60,1080.70 L859.50,1058.38 L841.62,1043.80 L864.66,1042.52Z" fill="#E9B25D" />
<path d="M838,1028 C836,1020 842,1014 850,1016" fill="none" stroke="#E9B25D" stroke-width="3.5"/><path d="M847,1010 L856,1017 L847,1023Z" fill="#E9B25D"/>
<path d="M1078.00,1015.00 L1084.32,1031.30 L1101.78,1032.27 L1088.22,1043.32 L1092.69,1060.23 L1078.00,1050.75 L1063.31,1060.23 L1067.78,1043.32 L1054.22,1032.27 L1071.68,1031.30Z" fill="#E9B25D" />
<path d="M1048.00,1053.00 L1051.79,1062.78 L1062.27,1063.36 L1054.13,1069.99 L1056.82,1080.14 L1048.00,1074.45 L1039.18,1080.14 L1041.87,1069.99 L1033.73,1063.36 L1044.21,1062.78Z" fill="#E9B25D" />
<path d="M1031,1051 L1043,1031 M1056,1083 L1096,1063 M1031,1051 L1056,1083" fill="none" stroke="#9A9A9A" stroke-width="2" stroke-dasharray="4,3"/>
<clipPath id="galclip"><rect x="186" y="1001" width="977" height="190"/></clipPath>
<g clip-path="url(#galclip)">
<clipPath id="lh0"><rect x="243.5" y="1143" width="40" height="80"/></clipPath><clipPath id="rh0"><rect x="283.5" y="1143" width="40" height="80"/></clipPath>
<path d="M283.50,1149.00 L292.09,1171.17 L315.84,1172.49 L297.40,1187.52 L303.48,1210.51 L283.50,1197.62 L263.52,1210.51 L269.60,1187.52 L251.16,1172.49 L274.91,1171.17Z" fill="#E9B25D" clip-path="url(#lh0)"/>
<path d="M283.50,1149.00 L292.09,1171.17 L315.84,1172.49 L297.40,1187.52 L303.48,1210.51 L283.50,1197.62 L263.52,1210.51 L269.60,1187.52 L251.16,1172.49 L274.91,1171.17Z" fill="#B5A897"  clip-path="url(#rh0)"/>
<clipPath id="lh1"><rect x="439.9" y="1143" width="40" height="80"/></clipPath><clipPath id="rh1"><rect x="479.9" y="1143" width="40" height="80"/></clipPath>
<path d="M479.90,1149.00 L488.49,1171.17 L512.24,1172.49 L493.80,1187.52 L499.88,1210.51 L479.90,1197.62 L459.92,1210.51 L466.00,1187.52 L447.56,1172.49 L471.31,1171.17Z" fill="#E9B25D" clip-path="url(#lh1)"/>
<path d="M479.90,1149.00 L488.49,1171.17 L512.24,1172.49 L493.80,1187.52 L499.88,1210.51 L479.90,1197.62 L459.92,1210.51 L466.00,1187.52 L447.56,1172.49 L471.31,1171.17Z" fill="#7B6751"  clip-path="url(#rh1)"/>
<clipPath id="lh2"><rect x="634.7" y="1143" width="40" height="80"/></clipPath><clipPath id="rh2"><rect x="674.7" y="1143" width="40" height="80"/></clipPath>
<path d="M674.70,1149.00 L683.29,1171.17 L707.04,1172.49 L688.60,1187.52 L694.68,1210.51 L674.70,1197.62 L654.72,1210.51 L660.80,1187.52 L642.36,1172.49 L666.11,1171.17Z" fill="#E9B25D" clip-path="url(#lh2)"/>
<path d="M674.70,1149.00 L683.29,1171.17 L707.04,1172.49 L688.60,1187.52 L694.68,1210.51 L674.70,1197.62 L654.72,1210.51 L660.80,1187.52 L642.36,1172.49 L666.11,1171.17Z" fill="#F0D39F"  clip-path="url(#rh2)"/>
<clipPath id="lh3"><rect x="830.4" y="1143" width="40" height="80"/></clipPath><clipPath id="rh3"><rect x="870.4" y="1143" width="40" height="80"/></clipPath>
<path d="M870.40,1149.00 L878.99,1171.17 L902.74,1172.49 L884.30,1187.52 L890.38,1210.51 L870.40,1197.62 L850.42,1210.51 L856.50,1187.52 L838.06,1172.49 L861.81,1171.17Z" fill="#E9B25D" clip-path="url(#lh3)"/>
<path d="M870.40,1149.00 L878.99,1171.17 L902.74,1172.49 L884.30,1187.52 L890.38,1210.51 L870.40,1197.62 L850.42,1210.51 L856.50,1187.52 L838.06,1172.49 L861.81,1171.17Z" fill="#F8EBD8" stroke="#E9B25D" stroke-width="2" clip-path="url(#rh3)"/>
<clipPath id="lh4"><rect x="1025.4" y="1143" width="40" height="80"/></clipPath><clipPath id="rh4"><rect x="1065.4" y="1143" width="40" height="80"/></clipPath>
<path d="M1065.40,1149.00 L1073.99,1171.17 L1097.74,1172.49 L1079.30,1187.52 L1085.38,1210.51 L1065.40,1197.62 L1045.42,1210.51 L1051.50,1187.52 L1033.06,1172.49 L1056.81,1171.17Z" fill="#E9B25D" clip-path="url(#lh4)"/>
<path d="M1065.40,1149.00 L1073.99,1171.17 L1097.74,1172.49 L1079.30,1187.52 L1085.38,1210.51 L1065.40,1197.62 L1045.42,1210.51 L1051.50,1187.52 L1033.06,1172.49 L1056.81,1171.17Z" fill="#3D7DC0"  clip-path="url(#rh4)"/>
</g>
<path d="M213.70,1205.50 L218.27,1217.71 L231.29,1218.28 L221.09,1226.40 L224.57,1238.97 L213.70,1231.77 L202.83,1238.97 L206.31,1226.40 L196.11,1218.28 L209.13,1217.71Z" fill="#5FA38C" />
<path d="M213.70,1262.50 L218.27,1274.71 L231.29,1275.28 L221.09,1283.40 L224.57,1295.97 L213.70,1288.77 L202.83,1295.97 L206.31,1283.40 L196.11,1275.28 L209.13,1274.71Z" fill="#E9B25D" />
<path d="M213.70,1319.50 L218.27,1331.71 L231.29,1332.28 L221.09,1340.40 L224.57,1352.97 L213.70,1345.77 L202.83,1352.97 L206.31,1340.40 L196.11,1332.28 L209.13,1331.71Z" fill="#DD502E" />
<path d="M214.00,1381.00 L218.07,1391.89 L229.69,1392.40 L220.59,1399.64 L223.70,1410.85 L214.00,1404.43 L204.30,1410.85 L207.41,1399.64 L198.31,1392.40 L209.93,1391.89Z" fill="none" stroke="#777777" stroke-width="2.5"/>
<circle cx="213.5" cy="1379" r="2.5" fill="#3A9A4A"/><circle cx="210" cy="1382.5" r="2.5" fill="#E04030"/>
<path d="M216.5,1458.0 L216.1,1461.0 L212.2,1462.1 L210.9,1463.9 L210.8,1468.0 L208.0,1469.1 L205.0,1466.3 L202.9,1466.0 L199.2,1468.0 L196.9,1466.1 L197.8,1462.1 L197.0,1460.1 L193.5,1458.0 L193.9,1455.0 L197.8,1453.9 L199.1,1452.1 L199.2,1448.0 L202.0,1446.9 L205.0,1449.7 L207.1,1450.0 L210.8,1448.0 L213.1,1449.9 L212.2,1453.9 L213.0,1455.9Z" fill="#B4B4B4"/><circle cx="205" cy="1458" r="4" fill="#FFFFFF"/>
<path d="M232.5,1441.0 L232.2,1443.5 L228.9,1444.4 L227.8,1445.8 L227.8,1449.2 L225.5,1450.2 L223.0,1447.8 L221.2,1447.6 L218.2,1449.2 L216.3,1447.7 L217.1,1444.4 L216.4,1442.8 L213.5,1441.0 L213.8,1438.5 L217.1,1437.6 L218.2,1436.2 L218.2,1432.8 L220.5,1431.8 L223.0,1434.2 L224.8,1434.4 L227.8,1432.8 L229.7,1434.3 L228.9,1437.6 L229.6,1439.2Z" fill="#B4B4B4"/><circle cx="223" cy="1441" r="3.5" fill="#FFFFFF"/>
<rect x="1193" y="1484" width="4" height="4" fill="#888"/>
</svg>
<div class="t" style="left:205.43px;top:327.94px;font-size:25.10px;color:#595959;-webkit-text-stroke:0.30px #595959;font-weight:700;transform:scaleX(0.9359);">なし</div>
<div class="t" style="left:204.27px;top:514.88px;font-size:22.96px;color:#595959;-webkit-text-stroke:0.30px #595959;font-weight:700;transform:scaleX(1.2416);">開始</div>
<div class="t" style="left:204.51px;top:963.73px;font-size:22.50px;color:#595959;-webkit-text-stroke:0.30px #595959;font-weight:700;transform:scaleX(1.2875);">強調</div>
<div class="t" style="left:260.83px;top:459.91px;font-size:26.30px;color:#444444;-webkit-text-stroke:0.35px #444444;transform:scaleX(0.8927);">なし</div>
<div class="t" style="left:237.14px;top:642.38px;font-size:30.46px;color:#505050;-webkit-text-stroke:0.35px #505050;transform:scaleX(0.7418);">アピール</div>
<div class="t" style="left:436.64px;top:645.30px;font-size:27.01px;color:#505050;-webkit-text-stroke:0.35px #505050;transform:scaleX(0.7940);">フェード</div>
<div class="t" style="left:610.94px;top:643.84px;font-size:28.74px;color:#505050;-webkit-text-stroke:0.35px #505050;transform:scaleX(0.7201);">スライドイン</div>
<div class="t" style="left:805.67px;top:643.84px;font-size:28.74px;color:#505050;-webkit-text-stroke:0.35px #505050;transform:scaleX(0.7374);">フロートイン</div>
<div class="t" style="left:1013.33px;top:645.30px;font-size:27.01px;color:#505050;-webkit-text-stroke:0.35px #505050;transform:scaleX(0.7723);">スプリット</div>
<div class="t" style="left:248.97px;top:776.50px;font-size:26.70px;color:#505050;-webkit-text-stroke:0.35px #505050;transform:scaleX(0.8165);">ワイプ</div>
<div class="t" style="left:447.63px;top:777.62px;font-size:25.38px;color:#505050;-webkit-text-stroke:0.35px #505050;transform:scaleX(1.1675);">図形</div>
<div class="t" style="left:627.08px;top:776.24px;font-size:27.01px;color:#505050;-webkit-text-stroke:0.35px #505050;transform:scaleX(0.8518);">ホイール</div>
<div class="t" style="left:790.32px;top:777.86px;font-size:25.10px;color:#505050;-webkit-text-stroke:0.35px #505050;transform:scaleX(0.8984);">ランダムスト...</div>
<div class="t" style="left:989.46px;top:775.44px;font-size:27.96px;color:#505050;-webkit-text-stroke:0.35px #505050;transform:scaleX(0.7652);">グローとターン</div>
<div class="t" style="left:245.54px;top:907.55px;font-size:27.59px;color:#505050;-webkit-text-stroke:0.35px #505050;transform:scaleX(0.8867);">ズーム</div>
<div class="t" style="left:444.07px;top:908.33px;font-size:26.67px;color:#505050;-webkit-text-stroke:0.35px #505050;transform:scaleX(0.8438);">ターン</div>
<div class="t" style="left:631.00px;top:908.04px;font-size:27.01px;color:#505050;-webkit-text-stroke:0.35px #505050;transform:scaleX(0.8073);">バウンド</div>
<div class="t" style="left:248.40px;top:1089.92px;font-size:31.14px;color:#505050;-webkit-text-stroke:0.35px #505050;transform:scaleX(0.7615);">パルス</div>
<div class="t" style="left:406.54px;top:1091.49px;font-size:29.29px;color:#505050;-webkit-text-stroke:0.35px #505050;transform:scaleX(0.7808);">カラー パルス</div>
<div class="t" style="left:623.28px;top:1089.77px;font-size:31.31px;color:#505050;-webkit-text-stroke:0.35px #505050;transform:scaleX(0.7902);">シーソー</div>
<div class="t" style="left:834.54px;top:1091.27px;font-size:29.53px;color:#505050;-webkit-text-stroke:0.35px #505050;transform:scaleX(0.7857);">スピン</div>
<div class="t" style="left:1000.20px;top:1092.77px;font-size:27.76px;color:#505050;-webkit-text-stroke:0.35px #505050;transform:scaleX(1.0942);">拡大/収縮</div>
<div class="t" style="left:260.20px;top:1210.47px;font-size:27.15px;color:#444444;-webkit-text-stroke:0.35px #444444;transform:scaleX(0.9666);">その他の開始効果</div>
<div class="t" style="left:472.52px;top:1207.54px;font-size:30.61px;color:#444444;-webkit-text-stroke:0.35px #444444;transform:scaleX(1.0774);">(E)...</div>
<div class="t" style="left:260.20px;top:1267.67px;font-size:27.10px;color:#444444;-webkit-text-stroke:0.35px #444444;transform:scaleX(0.9684);">その他の強調効果</div>
<div class="t" style="left:472.50px;top:1264.74px;font-size:30.56px;color:#444444;-webkit-text-stroke:0.35px #444444;transform:scaleX(1.0883);">(M)...</div>
<div class="t" style="left:259.90px;top:1324.42px;font-size:27.34px;color:#444444;-webkit-text-stroke:0.35px #444444;transform:scaleX(0.9611);">その他の終了効果</div>
<div class="t" style="left:472.48px;top:1321.46px;font-size:30.83px;color:#444444;-webkit-text-stroke:0.35px #444444;transform:scaleX(1.0923);">(X)...</div>
<div class="t" style="left:260.12px;top:1381.52px;font-size:27.95px;color:#444444;-webkit-text-stroke:0.35px #444444;transform:scaleX(0.8392);">その他のアニメーションの軌跡効果</div>
<div class="t" style="left:641.74px;top:1378.50px;font-size:31.52px;color:#444444;-webkit-text-stroke:0.35px #444444;transform:scaleX(1.0337);">(P)...</div>
<div class="t" style="left:260.82px;top:1438.16px;font-size:28.14px;color:#ABABAB;-webkit-text-stroke:0.35px #ABABAB;transform:scaleX(0.8376);">OLE アクションの動作</div>
<div class="t" style="left:507.71px;top:1435.12px;font-size:31.73px;color:#ABABAB;-webkit-text-stroke:0.35px #ABABAB;transform:scaleX(1.0431);">(O)...</div>
<div class="r" style="left:485px;top:1235px;width:17px;height:2px;background:#555;"></div>
<div class="r" style="left:485px;top:1292px;width:23.399999999999977px;height:2px;background:#555;"></div>
<div class="r" style="left:485px;top:1349.5px;width:18.5px;height:2.0px;background:#555;"></div>
<div class="r" style="left:653.3px;top:1406.5px;width:16.700000000000045px;height:2.0px;background:#555;"></div>
<div class="r" style="left:520px;top:1464px;width:21.5px;height:2px;background:#B0B0B0;"></div>
</div>
</body></html>
